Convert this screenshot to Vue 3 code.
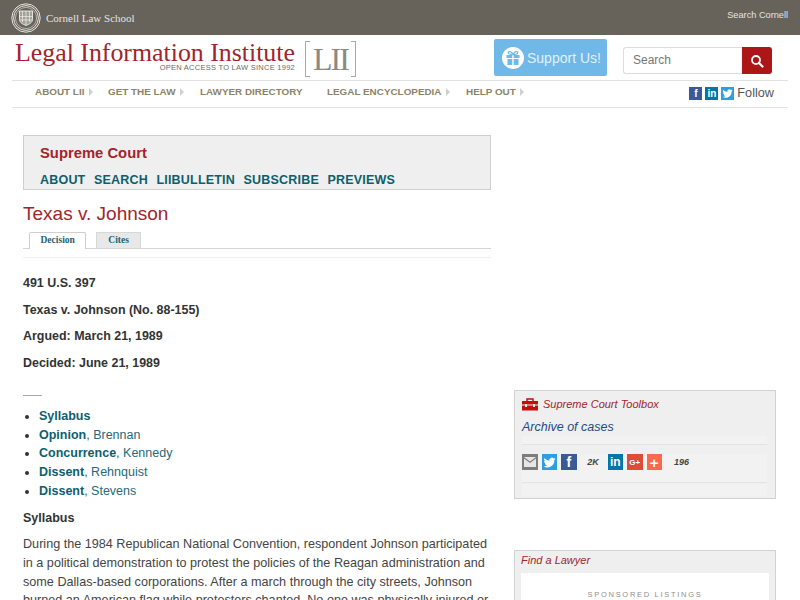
<template>
  <div class="page">
    <div class="top-bar">
      <div class="cornell">
        <svg class="seal" width="30" height="30" viewBox="0 0 30 30">
          <circle cx="15" cy="15" r="14.200" fill="none" stroke="#e8e6e2" stroke-width="1" />
          <circle cx="15" cy="15" r="12.400" fill="none" stroke="#e8e6e2" stroke-width="1" />
          <circle cx="15" cy="15" r="10.600" fill="none" stroke="#c9c6c0" stroke-width="0.800" />
          <path d="M8.500 8h13v8.500c0 3.200-3.500 4.800-6.500 6-3-1.200-6.500-2.800-6.500-6z" fill="#a3a09a" stroke="#efeeeb" stroke-width="0.900" />
          <path d="M8.500 13.500h13M15 8v14M11.500 8v11M18.500 8v11M8.500 17h13" stroke="#efeeeb" stroke-width="0.700" />
        </svg>
        <span class="cornell-name">Cornell Law School</span>
      </div>
      <span class="search-cornell">Search Cornell</span>
    </div>

    <div class="brand-row">
      <div class="logo">
        <div class="logo-words">
          <div class="logo-name">Legal Information Institute</div>
          <div class="logo-tag">OPEN ACCESS TO LAW SINCE 1992</div>
        </div>
        <div class="logo-mark">LII</div>
      </div>
      <a class="support">
        <span class="gift">
          <svg width="16" height="16" viewBox="0 0 16 16">
            <path d="M8 4.500C6.500 1 3 .8 3.300 3c.2 1.300 2.700 1.500 4.700 1.500zM8 4.500c1.500-3.500 5-3.700 4.700-1.500-.2 1.300-2.700 1.500-4.700 1.500z" fill="none" stroke="#6fb8e8" stroke-width="1.300" />
            <path d="M1.500 5h5.800v3H1.500zM8.700 5h5.800v3H8.700zM2.500 9h4.800v6H2.500zM8.700 9h4.800v6H8.700z" fill="#6fb8e8" />
          </svg>
        </span>
        <span>Support Us!</span>
      </a>
      <div class="search">
        <div class="search-input">Search</div>
        <div class="search-btn">
          <svg width="14" height="14" viewBox="0 0 14 14">
            <circle cx="6" cy="6" r="4" fill="none" stroke="#fff" stroke-width="1.800" />
            <path d="M9 9l3.500 3.500" stroke="#fff" stroke-width="2.200" stroke-linecap="round" />
          </svg>
        </div>
      </div>
    </div>

    <div class="nav-row">
      <div class="nav-links">
        <a v-for="item in navItems" :key="item.label" class="nav-link" :style="{ width: item.width + 'px' }">
          {{ item.label }}<i v-if="item.arrow" class="caret"></i>
        </a>
      </div>
      <div class="follow">
        <span class="soc fb">f</span>
        <span class="soc li">in</span>
        <span class="soc tw">
          <svg width="11" height="11" viewBox="0 0 24 24"><path :d="birdPath" fill="#fff" /></svg>
        </span>
        <span class="follow-text">Follow</span>
      </div>
    </div>

    <div class="columns">
      <main class="content">
        <div class="court-box">
          <div class="court-title">Supreme Court</div>
          <div class="court-links">
            <a v-for="link in courtLinks" :key="link">{{ link }}</a>
          </div>
        </div>
        <h1 class="case-title">Texas v. Johnson</h1>
        <div class="tabs">
          <span class="tab active">Decision</span>
          <span class="tab">Cites</span>
        </div>
        <div class="facts">
          <p v-for="fact in facts" :key="fact">{{ fact }}</p>
        </div>
        <div class="short-rule"></div>
        <ul class="parts">
          <li v-for="part in parts" :key="part.name + part.author">
            <b>{{ part.name }}</b><span v-if="part.author">, {{ part.author }}</span>
          </li>
        </ul>
        <div class="syllabus-head">Syllabus</div>
        <p class="syllabus">During the 1984 Republican National Convention, respondent Johnson participated<br>in a political demonstration to protest the policies of the Reagan administration and<br>some Dallas-based corporations. After a march through the city streets, Johnson<br>burned an American flag while protesters chanted. No one was physically injured or</p>
      </main>

      <aside class="side">
        <div class="toolbox">
          <div class="tool-head">
            <svg width="16" height="13" viewBox="0 0 16 13">
              <path d="M5 3V1h6v2" fill="none" stroke="#c40d0d" stroke-width="1.400" />
              <path d="M0 3h16v3.500H0zM0 7.500h16v5H0z" fill="#c40d0d" />
              <path d="M3 6h2v3H3zM11 6h2v3h-2z" fill="#f4f4f4" />
            </svg>
            <span>Supreme Court Toolbox</span>
          </div>
          <div class="archive">Archive of cases</div>
          <div class="band thin"></div>
          <div class="share">
            <span class="sh mail">
              <svg width="12" height="10" viewBox="0 0 12 10">
                <path d="M0 0h12L6 4.500z" fill="#e6e6e6" />
                <path d="M0 1.500l6 4.500 6-4.500V10H0z" fill="#e6e6e6" />
              </svg>
            </span>
            <span class="sh tw">
              <svg width="13" height="13" viewBox="0 0 24 24"><path :d="birdPath" fill="#fff" /></svg>
            </span>
            <span class="sh fb">f</span>
            <span class="count first">2K</span>
            <span class="sh li">in</span>
            <span class="sh gp">G+</span>
            <span class="sh plus">+</span>
            <span class="count second">196</span>
          </div>
          <div class="band low"></div>
          <div class="band last"></div>
        </div>

        <div class="lawyer">
          <div class="lawyer-head">Find a Lawyer</div>
          <div class="listings">SPONSORED LISTINGS</div>
        </div>
      </aside>
    </div>
  </div>
</template>

<script setup>
const birdPath = 'M23 5c-.8.4-1.700.6-2.600.8.900-.6 1.700-1.500 2-2.500-.9.5-1.900.9-2.900 1.100A4.600 4.600 0 0 0 11.700 8.600 13 13 0 0 1 2.300 3.800a4.600 4.600 0 0 0 1.400 6.100c-.7 0-1.400-.2-2-.6 0 2.200 1.600 4.100 3.700 4.600-.7.2-1.400.2-2.100.1.600 1.800 2.300 3.100 4.300 3.200A9.300 9.300 0 0 1 1 19.100 13 13 0 0 0 21 7.500c.9-.6 1.500-1.500 2-2.500z'

const navItems = [
  { label: 'ABOUT LII', arrow: true, width: 73 },
  { label: 'GET THE LAW', arrow: true, width: 92 },
  { label: 'LAWYER DIRECTORY', arrow: false, width: 127 },
  { label: 'LEGAL ENCYCLOPEDIA', arrow: true, width: 139 },
  { label: 'HELP OUT', arrow: true, width: 70 }
]

const courtLinks = ['ABOUT', 'SEARCH', 'LIIBULLETIN', 'SUBSCRIBE', 'PREVIEWS']

const facts = [
  '491 U.S. 397',
  'Texas v. Johnson (No. 88-155)',
  'Argued: March 21, 1989',
  'Decided: June 21, 1989'
]

const parts = [
  { name: 'Syllabus', author: '' },
  { name: 'Opinion', author: 'Brennan' },
  { name: 'Concurrence', author: 'Kennedy' },
  { name: 'Dissent', author: 'Rehnquist' },
  { name: 'Dissent', author: 'Stevens' }
]
</script>

<style>
html,
body {
  margin: 0;
  height: 600px;
  overflow: hidden;
  background: #fff;
}
</style>

<style scoped>
.page {
  height: 600px;
  overflow: hidden;
  font-family: "Liberation Sans", Arial, sans-serif;
  color: #333;
}

.top-bar {
  height: 35px;
  background: #67625a;
  display: flex;
  justify-content: space-between;
  padding: 0 12px 0 11px;
}

.cornell {
  display: flex;
  align-items: center;
  gap: 5px;
}

.cornell-name {
  font-family: "Liberation Serif", serif;
  font-size: 11px;
  color: #e6e4e0;
}

.search-cornell {
  font-size: 9.200px;
  color: #e6e4e0;
  line-height: 31px;
}

.brand-row {
  height: 45px;
  margin: 0 12px;
  border-bottom: 1px solid #e2e2e0;
  display: flex;
  align-items: flex-start;
}

.logo {
  display: flex;
  width: 482px;
  padding: 6px 0 0 3px;
  box-sizing: border-box;
}

.logo-words {
  width: 280px;
}

.logo-name {
  font-family: "Liberation Serif", serif;
  font-size: 25.850px;
  line-height: 24px;
  color: #a3242a;
  white-space: nowrap;
}

.logo-tag {
  font-size: 7.500px;
  letter-spacing: 0.260px;
  line-height: 6px;
  text-align: right;
  color: #6b6b66;
  white-space: nowrap;
}

.logo-mark {
  margin-left: 10px;
  width: 51px;
  height: 36px;
  font-family: "Liberation Serif", serif;
  font-size: 32px;
  letter-spacing: -2px;
  line-height: 36px;
  text-align: center;
  color: #8a8984;
  position: relative;
}

.logo-mark::before,
.logo-mark::after {
  content: "";
  position: absolute;
  top: 0;
  bottom: 0;
  width: 4px;
  border: 1px solid #aaa9a4;
}

.logo-mark::before {
  left: 0;
  border-right: none;
}

.logo-mark::after {
  right: 0;
  border-left: none;
}

.support {
  margin-top: 4px;
  width: 113px;
  height: 37px;
  background: #6fb8e8;
  border-radius: 2px;
  display: flex;
  align-items: center;
  padding-left: 8px;
  box-sizing: border-box;
  gap: 3px;
  color: #e3f1fb;
  font-size: 14px;
  white-space: nowrap;
}

.gift {
  width: 22px;
  height: 22px;
  border-radius: 50%;
  background: #fff;
  display: flex;
  align-items: center;
  justify-content: center;
}

.search {
  display: flex;
  margin: 12px 0 0 16px;
  width: 149px;
  height: 27px;
}

.search-input {
  flex: 1;
  box-sizing: border-box;
  border: 1px solid #ddd;
  border-right: none;
  border-radius: 3px 0 0 3px;
  font-size: 12px;
  line-height: 25px;
  padding-left: 9px;
  color: #777;
}

.search-btn {
  width: 30px;
  background: #ad1616;
  border-radius: 0 3px 3px 0;
  display: flex;
  align-items: center;
  justify-content: center;
}

.nav-row {
  height: 26px;
  margin: 0 12px;
  border-bottom: 1px solid #e2e2e0;
  display: flex;
  justify-content: space-between;
}

.nav-links {
  display: flex;
  padding-left: 23px;
  line-height: 21px;
}

.nav-link {
  font-size: 9.900px;
  font-weight: bold;
  color: #8c8468;
  white-space: nowrap;
}

.caret {
  display: inline-block;
  margin-left: 4.500px;
  border-left: 4px solid #d2d0cc;
  border-top: 4px solid transparent;
  border-bottom: 4px solid transparent;
  vertical-align: -1px;
}

.follow {
  display: flex;
  align-items: flex-start;
  padding-top: 6px;
  padding-right: 14px;
  gap: 3px;
}

.soc {
  width: 13px;
  height: 13px;
  color: #fff;
  font-size: 10px;
  font-weight: bold;
  line-height: 13px;
  text-align: center;
  display: flex;
  align-items: center;
  justify-content: center;
}

.soc.fb {
  background: #3b5998;
}

.soc.li {
  background: #0077a5;
}

.soc.tw {
  background: #2b9fe3;
}

.follow-text {
  font-size: 12.700px;
  line-height: 13px;
  color: #555;
}

.columns {
  display: grid;
  grid-template-columns: 468px 262px;
  column-gap: 23px;
  padding: 27px 0 0 23px;
}

.court-box {
  height: 55px;
  box-sizing: border-box;
  background: #efefef;
  border: 1px solid #cfcfcf;
  padding: 9px 16px 0;
}

.court-title {
  font-size: 14.800px;
  font-weight: bold;
  line-height: 16px;
  color: #a3242a;
}

.court-links {
  margin-top: 12px;
  display: flex;
  gap: 8.500px;
  font-size: 12.500px;
  font-weight: bold;
  letter-spacing: 0.200px;
  line-height: 14px;
  color: #0c5f6e;
}

.case-title {
  margin: 13px 0 0;
  font-size: 19px;
  font-weight: normal;
  line-height: 22px;
  color: #a3242a;
}

.tabs {
  margin-top: 7px;
  height: 16px;
  padding-left: 6px;
  display: flex;
  gap: 10px;
  border-bottom: 1px solid #d4d4d4;
  font-family: "Liberation Serif", serif;
  font-size: 9.500px;
  font-weight: bold;
  color: #23616f;
}

.tab {
  box-sizing: border-box;
  height: 16px;
  line-height: 15px;
  padding: 0 11px;
  background: #e8e8e8;
  border: 1px solid #d8d8d8;
  border-bottom: none;
}

.tab.active {
  height: 17px;
  padding: 0 10.500px;
  background: #fff;
  border-color: #cfcfcf;
  border-radius: 2px 2px 0 0;
}

.facts {
  margin-top: 8px;
  border-top: 1px solid #f0f0f0;
  padding-top: 16px;
}

.facts p {
  margin: 0 0 8px;
  font-size: 12.450px;
  font-weight: bold;
  line-height: 18.500px;
  color: #333;
}

.short-rule {
  width: 19px;
  border-top: 1px solid #a8a8a8;
  margin-top: 23px;
}

.parts {
  margin: 11px 0 0;
  padding: 0 0 0 16px;
  font-size: 12.500px;
  line-height: 18.700px;
  color: #26697a;
}

.parts li::marker {
  color: #333;
}

.parts b {
  color: #0c5f6e;
}

.syllabus-head {
  margin-top: 8px;
  font-size: 12.500px;
  font-weight: bold;
  line-height: 18.700px;
}

.syllabus {
  margin: 8px 0 0;
  font-size: 12.630px;
  line-height: 18.700px;
  color: #444;
  white-space: nowrap;
}

.side {
  padding-top: 255px;
}

.toolbox {
  height: 109px;
  box-sizing: border-box;
  background: #efefef;
  border: 1px solid #d2d2d2;
  padding: 6px 7px 0;
}

.tool-head {
  display: flex;
  align-items: center;
  gap: 5px;
  font-size: 11px;
  font-style: italic;
  line-height: 14px;
  color: #a3242a;
}

.archive {
  margin-top: 9px;
  font-size: 12.500px;
  font-style: italic;
  line-height: 15px;
  color: #254a80;
}

.band {
  background: #f2f2f2;
  margin-right: 1px;
}

.thin {
  height: 8px;
  margin-top: 1px;
  border-bottom: 1px solid #e4e4e4;
}

.share {
  margin-top: 9px;
  display: flex;
  align-items: center;
  background: #f2f2f2;
  height: 16px;
  gap: 4px;
  margin-right: 1px;
}

.sh {
  width: 15.500px;
  height: 16px;
  flex: none;
  display: flex;
  align-items: center;
  justify-content: center;
  color: #fff;
  font-weight: bold;
  font-size: 11px;
}

.sh.mail {
  background: #7d7d7d;
}

.sh.tw {
  background: #2b9fe3;
}

.sh.fb {
  background: #3b5998;
  font-size: 14px;
}

.sh.li {
  background: #0077a5;
  font-size: 12px;
}

.sh.gp {
  background: #dd4b39;
  font-size: 8px;
}

.sh.plus {
  background: #fb6a4f;
  font-size: 15px;
}

.count {
  width: 21px;
  font-size: 9px;
  font-style: italic;
  font-weight: bold;
  text-align: center;
  color: #444;
}

.count.first {
  margin-left: 2px;
}

.count.second {
  width: 23px;
  margin-left: 4px;
}

.low {
  height: 12px;
  border-bottom: 1px solid #e4e4e4;
}

.last {
  height: 12px;
  margin-top: 1px;
}

.lawyer {
  margin-top: 51px;
  height: 80px;
  box-sizing: border-box;
  background: #efefef;
  border: 1px solid #d2d2d2;
  padding: 0 6px;
}

.lawyer-head {
  font-size: 11px;
  font-style: italic;
  line-height: 18px;
  padding-bottom: 4px;
  color: #a3242a;
}

.listings {
  height: 60px;
  background: #fff;
  text-align: center;
  font-size: 7.500px;
  letter-spacing: 1.700px;
  line-height: 44px;
  color: #8f8f8f;
}
</style>
